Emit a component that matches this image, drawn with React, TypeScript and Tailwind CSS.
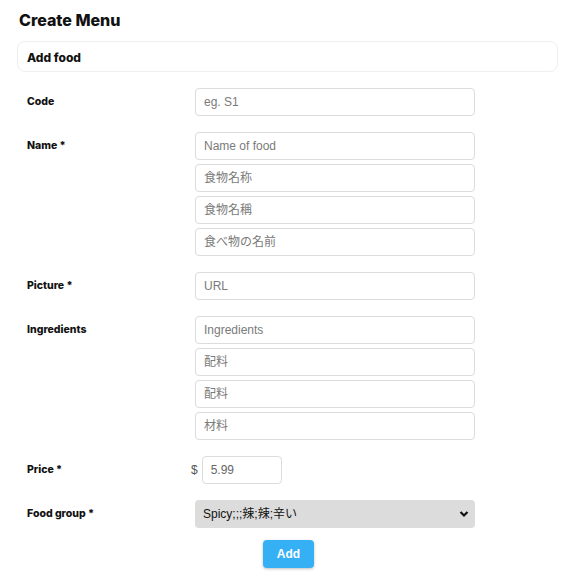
import React from "react";

const inputCls =
  "block w-[280px] h-[28px] rounded-[4px] border border-[#dcdcdc] bg-white px-[8px] text-[12px] text-[#555] placeholder:text-[#7a7a7a] outline-none";
const inputFont = { fontFamily: '"Liberation Sans", Arial, "Noto Sans CJK JP", sans-serif' };

function Row({ label, children }: { label: string; children: React.ReactNode }) {
  return (
    <div className="flex items-start">
      <div className="w-[168px] pt-[7px] text-[10.5px] font-extrabold text-[#111] leading-[14px]">{label}</div>
      <div className="flex flex-col gap-[4px]">{children}</div>
    </div>
  );
}

function Inp({ placeholder }: { placeholder: string }) {
  return <input className={inputCls} style={inputFont} placeholder={placeholder} />;
}

export default function App() {
  return (
    <div
      className="w-[573px] min-h-[574px] bg-white px-[17px] pt-[9px]"
      style={{ fontFamily: 'Inter, "Noto Sans", sans-serif' }}
    >
      <h1 className="pl-[2px] text-[16px] font-extrabold leading-[22px] text-[#111]">Create Menu</h1>
      <div className="mt-[10px] h-[31px] w-[541px] rounded-[8px] border border-[#efefef] px-[9px] flex items-center">
        <span className="pt-[2px] text-[12px] font-extrabold text-[#111]">Add food</span>
      </div>
      <div className="mt-[16px] pl-[10px] flex flex-col gap-[16px]">
        <Row label="Code">
          <Inp placeholder="eg. S1" />
        </Row>
        <Row label="Name *">
          <Inp placeholder="Name of food" />
          <Inp placeholder="食物名称" />
          <Inp placeholder="食物名稱" />
          <Inp placeholder="食べ物の名前" />
        </Row>
        <Row label="Picture *">
          <Inp placeholder="URL" />
        </Row>
        <Row label="Ingredients">
          <Inp placeholder="Ingredients" />
          <Inp placeholder="配料" />
          <Inp placeholder="配料" />
          <Inp placeholder="材料" />
        </Row>
        <div className="flex items-start">
          <div className="w-[164px] pt-[7px] text-[10.5px] font-extrabold text-[#111] leading-[14px]">Price *</div>
          <div className="flex items-center gap-[4px]">
            <span className="text-[12px] text-[#555]" style={inputFont}>$</span>
            <input
              className="block w-[80px] h-[28px] rounded-[4px] border border-[#dcdcdc] bg-white px-[8px] text-[12px] text-[#666] outline-none"
              style={inputFont}
              defaultValue="5.99"
            />
          </div>
        </div>
        <Row label="Food group *">
          <div
            className="relative w-[280px] h-[28px] rounded-[4px] bg-[#dcdcdc] flex items-center px-[8px] text-[12px] text-[#111]"
            style={inputFont}
          >
            <span>Spicy;;;辣;辣;辛い</span>
            <svg
              className="absolute right-[6px] top-[10px]"
              width="10"
              height="8"
              viewBox="0 0 10 8"
              fill="none"
            >
              <path d="M1.5 2 L5 5.5 L8.5 2" stroke="#111" strokeWidth="2.2" />
            </svg>
          </div>
        </Row>
      </div>
      <div className="mt-[12px] flex justify-center pl-[4px]">
        <button
          className="h-[28px] w-[51px] rounded-[4px] bg-[#35b0f5] text-[12px] font-bold text-white shadow-[0_1px_3px_rgba(0,0,0,0.25)]"
          style={inputFont}
        >
          Add
        </button>
      </div>
    </div>
  );
}
